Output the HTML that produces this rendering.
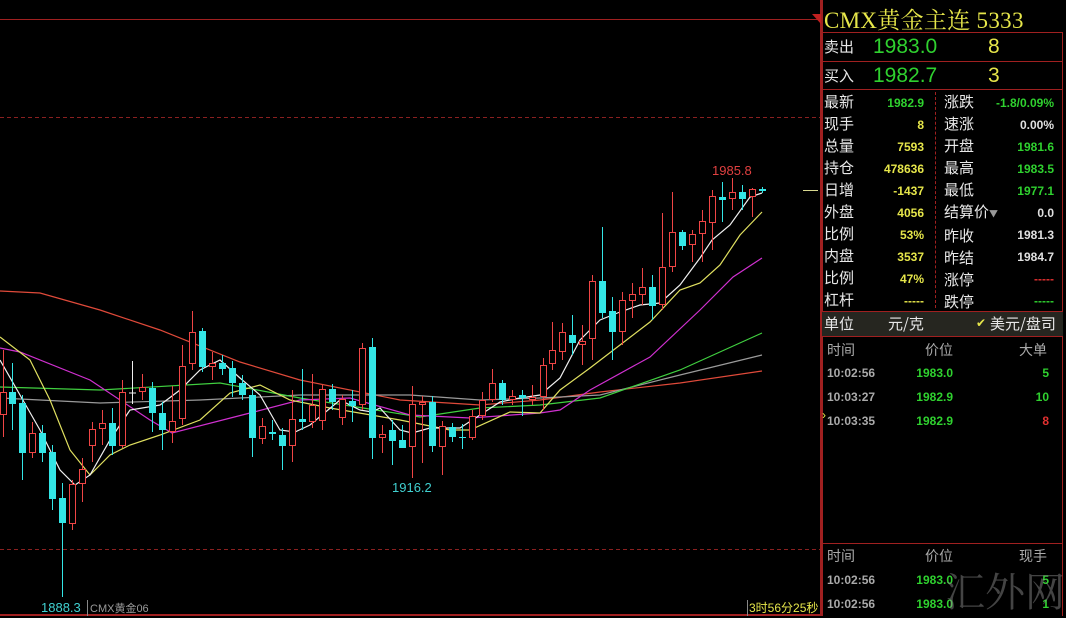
<!DOCTYPE html>
<html><head><meta charset="utf-8">
<style>
*{margin:0;padding:0;box-sizing:border-box}
body{width:1066px;height:616px;background:#000;overflow:hidden;position:relative;font-family:"Liberation Sans","Noto Sans CJK SC",sans-serif;}
.p{position:absolute;white-space:nowrap}
.cn{font-family:"Noto Sans CJK SC","WenQuanYi Zen Hei",sans-serif;color:#e8e8e8;font-size:15px}
.v{font-weight:bold;font-size:12px;text-align:right}
.y{color:#e6e64a}.g{color:#2fd12f}.w{color:#e0e0e0}.r{color:#e03030}.gr{color:#aaa}
</style></head><body>
<svg id="ch" width="822" height="616" style="position:absolute;left:0;top:0">
<line x1="0" y1="19.5" x2="820" y2="19.5" stroke="#a02020" stroke-width="1"/>
<line x1="0" y1="117.5" x2="820" y2="117.5" stroke="#8a2020" stroke-dasharray="4,3"/>
<line x1="0" y1="549.5" x2="820" y2="549.5" stroke="#8a2020" stroke-dasharray="4,3"/>
<line x1="0" y1="615" x2="822" y2="615" stroke="#a02020" stroke-width="2"/>
<line x1="821" y1="0" x2="821" y2="616" stroke="#a02020" stroke-width="2"/>
<polygon points="812,14 821,14 821,24" fill="#c02020"/>
<line x1="803" y1="190.5" x2="818" y2="190.5" stroke="#d8d890"/>
<g id="ma" fill="none" stroke-width="1.2"></g>
<g id="cd"></g>
<text x="712" y="175" fill="#e04040" font-size="13" font-family="Liberation Sans">1985.8</text>
<text x="392" y="492" fill="#40d0d0" font-size="13" font-family="Liberation Sans">1916.2</text>
<text x="41" y="612" fill="#40d0d0" font-size="13" font-family="Liberation Sans">1888.3</text>
<line x1="87.5" y1="600" x2="87.5" y2="616" stroke="#888"/>
<text x="90" y="612" fill="#999" font-size="11" font-family="Liberation Sans,Noto Sans CJK SC,sans-serif">CMX黄金06</text>
<line x1="747.5" y1="600" x2="747.5" y2="616" stroke="#888"/>
<text x="749" y="612" fill="#e6e64a" font-size="12" font-family="Liberation Sans,Noto Sans CJK SC,sans-serif">3时56分25秒</text>
</svg>
<script>
var C=[[3,392,415,'r',350,437],[12,392,404,'c',363,430],[22,403,453,'c',395,480],[32,433,453,'r',422,458],[42,433,453,'c',425,462],[52,452,499,'c',445,510],[62,498,523,'c',483,597],[72,484,524,'r',480,530],[82,469,484,'r',458,502],[92,429,446,'r',422,462],[102,423,429,'r',410,445],[112,423,446,'c',408,455],[122,392,446,'r',380,448],[132,393,394,'w',361,404],[142,387,392,'r',374,400],[152,388,413,'c',382,432],[162,413,430,'c',402,450],[172,421,432,'r',386,443],[182,366,419,'r',345,425],[192,332,364,'r',311,370],[202,331,367,'c',328,372],[212,363,367,'r',352,380],[222,363,369,'c',355,375],[232,368,383,'c',361,397],[242,383,395,'c',375,400],[252,395,438,'c',390,457],[262,426,439,'r',418,444],[272,432,434,'c',420,440],[282,435,446,'c',428,470],[292,419,446,'r',390,462],[302,419,422,'c',369,430],[312,405,422,'r',374,428],[322,389,421,'r',385,430],[332,389,402,'c',384,410],[342,399,418,'r',395,425],[352,401,406,'c',390,422],[362,348,405,'r',343,410],[372,347,438,'c',338,459],[382,434,438,'r',425,453],[392,430,441,'c',420,465],[402,440,448,'c',425,448],[412,404,447,'r',386,478],[422,402,405,'r',396,463],[432,402,446,'c',396,452],[442,426,447,'r',421,475],[452,427,437,'c',423,442],[462,437,438,'c',424,449],[472,416,438,'r',410,440],[482,400,416,'r',392,420],[492,383,400,'r',369,402],[502,383,400,'c',380,405],[512,396,400,'r',390,405],[522,395,398,'c',390,416],[532,397,400,'r',385,405],[543,365,397,'r',358,410],[552,350,364,'r',322,370],[562,332,352,'r',323,360],[572,335,343,'c',315,355],[582,341,345,'r',325,365],[592,281,339,'r',275,360],[602,281,313,'c',227,318],[612,311,332,'c',297,360],[622,300,332,'r',292,345],[632,294,301,'r',283,318],[642,287,295,'r',268,305],[652,287,306,'c',275,320],[662,267,305,'r',213,310],[672,232,267,'r',192,272],[682,232,246,'c',230,250],[692,234,245,'r',230,262],[702,221,234,'r',210,262],[712,196,223,'r',190,250],[722,197,200,'c',182,222],[732,192,199,'r',178,210],[742,192,199,'c',185,210],[752,189,197,'r',188,217],[762,189,191,'c',187,193]];
var col={r:'#f04545',c:'#33e6e6',w:'#eeeeee'};
var s='';
C.forEach(function(k){var x=k[0],c=col[k[3]];
s+='<line x1="'+(x+.5)+'" y1="'+k[4]+'" x2="'+(x+.5)+'" y2="'+k[5]+'" stroke="'+c+'"/>';
var h=Math.max(k[2]-k[1],1);
if(k[3]=='c')s+='<rect x="'+(x-3)+'" y="'+k[1]+'" width="7" height="'+h+'" fill="'+c+'"/>';
else if(k[3]=='w')s+='<line x1="'+(x-3)+'" y1="'+k[1]+'" x2="'+(x+4)+'" y2="'+k[1]+'" stroke="'+c+'"/>';
else s+='<rect x="'+(x-2.5)+'" y="'+(k[1]+.5)+'" width="6" height="'+(h-1)+'" fill="#000" stroke="'+c+'"/>';});
document.getElementById('cd').innerHTML=s;
var L=[
['#e04a3a','0,291 40,293 100,310 160,330 240,362 300,380 400,400 480,405 540,400 600,392 680,383 762,371'],
['#9a9a9a','0,398 100,403 200,400 300,395 410,395 480,400 540,398 600,395 680,375 762,355'],
['#40d040','0,387 100,390 220,383 300,398 420,417 480,408 540,405 600,398 680,370 762,333'],
['#d030d0','0,348 20,352 90,380 150,420 172,433 250,413 300,400 350,398 410,415 470,418 540,413 560,410 590,390 650,357 700,310 733,277 762,258'],
['#e0e060','0,337 30,360 50,400 70,450 90,475 110,455 130,445 160,435 200,420 230,393 260,385 290,400 330,408 400,420 450,430 470,430 510,412 540,413 560,390 590,368 620,345 650,322 680,290 700,283 720,265 740,235 762,212'],
['#f0f0f0','0,360 20,395 40,430 60,470 75,485 90,475 110,440 130,410 160,405 180,390 200,370 220,360 240,378 260,395 280,430 295,432 310,425 340,400 360,410 372,412 380,408 400,430 412,433 430,428 460,428 480,415 500,402 520,398 540,395 560,378 580,340 600,320 620,312 640,305 660,303 680,285 700,258 712,240 730,225 750,197 762,193']];
var m='';L.forEach(function(l){m+='<polyline points="'+l[1]+'" stroke="'+l[0]+'"/>';});
document.getElementById('ma').innerHTML=m;
</script>

<div class="p" style="left:822px;top:0;width:244px;height:616px;background:#000;border-left:1px solid #a02020"></div>
<div class="p" style="left:1062px;top:32px;width:1px;height:584px;background:#a02020"></div>
<div class="p" style="left:824px;top:2px;font-family:'Liberation Serif','Noto Serif CJK SC',serif;color:#e6e64a;font-size:23px;letter-spacing:0.3px">CMX黄金主连&nbsp;5333</div>
<div class="p" style="left:822px;top:32px;width:241px;height:1px;background:#a02020"></div>
<div class="p cn" style="left:824px;top:36px;font-size:15px">卖出</div>
<div class="p g" style="left:873px;top:35px;font-size:21px">1983.0</div>
<div class="p y" style="left:988px;top:35px;font-size:21px">8</div>
<div class="p" style="left:822px;top:61px;width:241px;height:1px;background:#a02020"></div>
<div class="p cn" style="left:824px;top:65px;font-size:15px">买入</div>
<div class="p g" style="left:873px;top:64px;font-size:21px">1982.7</div>
<div class="p y" style="left:988px;top:64px;font-size:21px">3</div>
<div class="p" style="left:822px;top:89px;width:241px;height:1px;background:#a02020"></div>
<div class="p" style="left:935px;top:92px;width:0;height:216px;border-left:1px dashed #a02020"></div>

<div class="p cn" style="left:824px;top:91px;line-height:22px">最新<br>现手<br>总量<br>持仓<br>日增<br>外盘<br>比例<br>内盘<br>比例<br>杠杆</div>
<div class="p v" style="left:860px;top:92px;width:64px;line-height:22px"><span class="g">1982.9</span><br><span class="y">8</span><br><span class="y">7593</span><br><span class="y">478636</span><br><span class="y">-1437</span><br><span class="y">4056</span><br><span class="y">53%</span><br><span class="y">3537</span><br><span class="y">47%</span><br><span class="y">-----</span></div>
<div class="p cn" style="left:944px;top:91px;line-height:22px">涨跌<br>速涨<br>开盘<br>最高<br>最低<br>结算价<span style="color:#999;font-size:9px">&#9660;</span><br>昨收<br>昨结<br>涨停<br>跌停</div>
<div class="p v" style="left:980px;top:92px;width:74px;line-height:22px"><span class="g">-1.8/0.09%</span><br><span class="w">0.00%</span><br><span class="g">1981.6</span><br><span class="g">1983.5</span><br><span class="g">1977.1</span><br><span class="w">0.0</span><br><span class="w">1981.3</span><br><span class="w">1984.7</span><br><span class="r">-----</span><br><span class="g">-----</span></div>

<div class="p" style="left:822px;top:311px;width:241px;height:26px;background:#262620;border-top:1px solid #a02020;border-bottom:1px solid #a02020"></div>
<div class="p cn" style="left:824px;top:313px">单位</div>
<div class="p cn" style="left:888px;top:313px">元/克</div>
<div class="p" style="left:976px;top:316px;color:#e6e64a;font-size:12px">&#10004;</div>
<div class="p cn" style="left:990px;top:313px">美元/盘司</div>

<div class="p cn" style="left:827px;top:340px;color:#aaa;font-size:14px">时间</div>
<div class="p cn" style="left:925px;top:340px;color:#aaa;font-size:14px">价位</div>
<div class="p cn" style="left:1019px;top:340px;color:#aaa;font-size:14px">大单</div>
<div class="p v gr" style="left:827px;top:361px;line-height:24px;text-align:left">10:02:56<br>10:03:27<br>10:03:35</div>
<div class="p" style="left:822px;top:408px;color:#e6e64a;font-size:12px">&#8250;</div>
<div class="p v g" style="left:900px;top:361px;width:53px;line-height:24px">1983.0<br>1982.9<br>1982.9</div>
<div class="p v" style="left:1010px;top:361px;width:39px;line-height:24px"><span class="g">5</span><br><span class="g">10</span><br><span class="r">8</span></div>

<div class="p" style="left:822px;top:543px;width:241px;height:1px;background:#a02020"></div>
<div class="p cn" style="left:827px;top:546px;color:#aaa;font-size:14px">时间</div>
<div class="p cn" style="left:925px;top:546px;color:#aaa;font-size:14px">价位</div>
<div class="p cn" style="left:1019px;top:546px;color:#aaa;font-size:14px">现手</div>
<div class="p v gr" style="left:827px;top:568px;line-height:24px;text-align:left">10:02:56<br>10:02:56</div>
<div class="p v g" style="left:900px;top:568px;width:53px;line-height:24px">1983.0<br>1983.0</div>
<div class="p v g" style="left:1010px;top:568px;width:39px;line-height:24px">5<br>1</div>
<div class="p" style="left:945px;top:566px;color:rgba(150,150,150,0.45);font-size:40px;line-height:48px;font-family:'Noto Serif CJK SC',serif">汇外网</div>
</body></html>
